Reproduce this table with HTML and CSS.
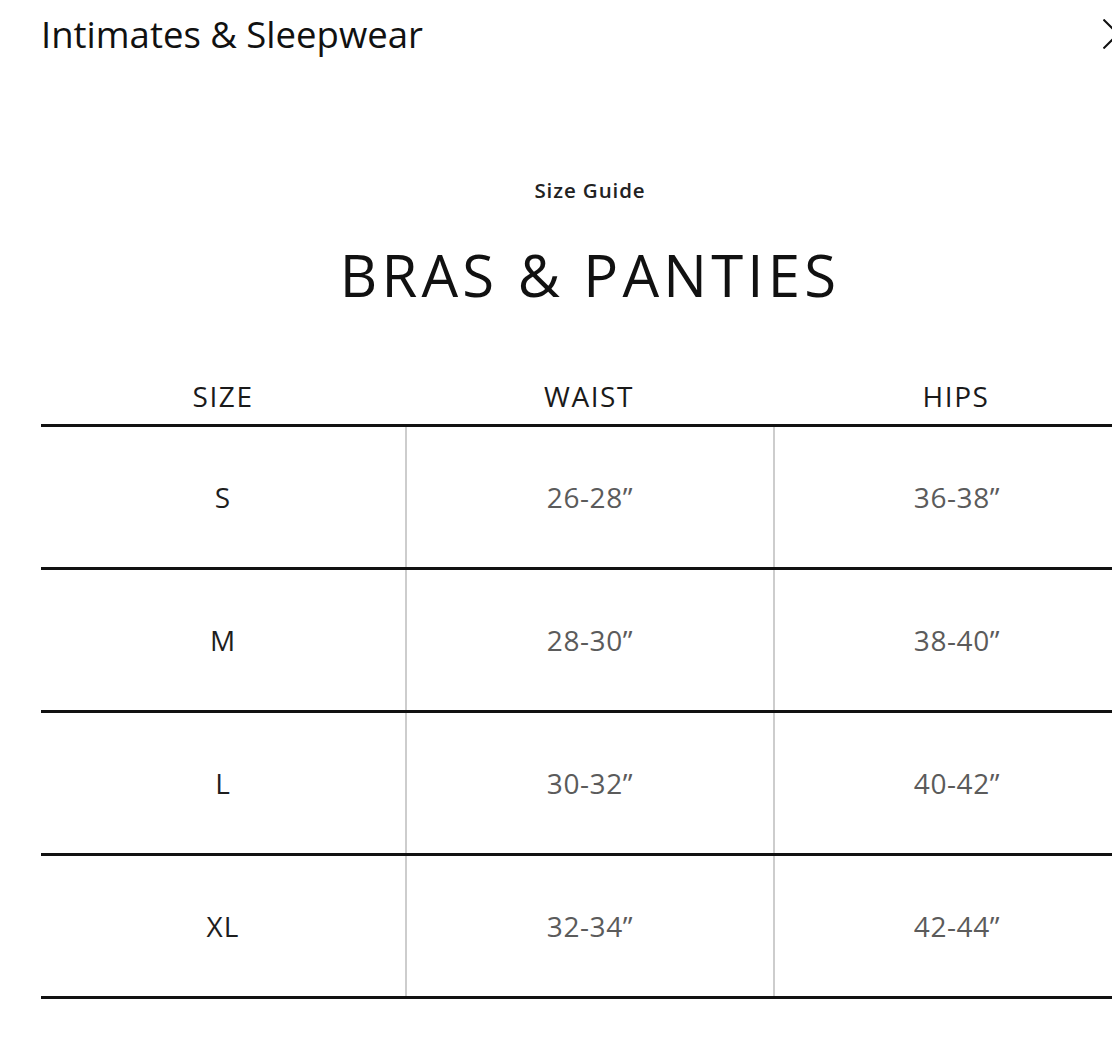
FILE: index.html
```html
<!DOCTYPE html>
<html lang="en">
<head>
<meta charset="utf-8">
<title>Intimates &amp; Sleepwear – Size Guide</title>
<link rel="stylesheet" href="styles.css">
</head>
<body>
  <header class="topbar">
    <h1 class="topbar-title">Intimates &amp; Sleepwear</h1>
    <button class="close-btn" aria-label="Close">
      <svg width="30" height="30" viewBox="0 0 30 30" aria-hidden="true">
        <path d="M0.5 0.5 L29.5 29.5 M0.5 29.5 L29.5 0.5" stroke="#111" stroke-width="2" fill="none"/>
      </svg>
    </button>
  </header>

  <section class="guide">
    <p class="guide-kicker">Size Guide</p>
    <h2 class="guide-title">BRAS &amp; PANTIES</h2>

    <div class="chart">
      <div class="chart-head">
        <div class="head-cell">SIZE</div>
        <div class="head-cell">WAIST</div>
        <div class="head-cell">HIPS</div>
      </div>
      <div class="chart-row">
        <div class="cell cell-size">S</div>
        <div class="cell cell-value">26-28”</div>
        <div class="cell cell-value">36-38”</div>
      </div>
      <div class="chart-row">
        <div class="cell cell-size">M</div>
        <div class="cell cell-value">28-30”</div>
        <div class="cell cell-value">38-40”</div>
      </div>
      <div class="chart-row">
        <div class="cell cell-size">L</div>
        <div class="cell cell-value">30-32”</div>
        <div class="cell cell-value">40-42”</div>
      </div>
      <div class="chart-row">
        <div class="cell cell-size">XL</div>
        <div class="cell cell-value">32-34”</div>
        <div class="cell cell-value">42-44”</div>
      </div>
    </div>
  </section>
</body>
</html>
```
FILE: styles.css
```css
html {
  overflow: hidden;
  background: #fff;
}

body {
  margin: 0;
  width: 1112px;
  overflow: hidden;
  background: #fff;
  font-family: "Open Sans", "Noto Sans", "Liberation Sans", sans-serif;
  color: #111;
}

.topbar {
  display: flex;
  align-items: center;
  justify-content: space-between;
  padding: 10px 0 0 41px;
  height: 48px;
}

.topbar-title {
  margin: 0;
  font-size: 36.5px;
  font-weight: 400;
  line-height: 48px;
  color: #111;
}

.close-btn {
  display: flex;
  padding: 0;
  margin: 0 -21px 0 0;
  border: 0;
  background: none;
  width: 30px;
  height: 30px;
  cursor: pointer;
}

.guide {
  width: 1098px;
  margin: 118px 0 0 41px;
  text-align: center;
}

.guide-kicker {
  margin: 0;
  font-size: 20.5px;
  font-weight: 600;
  line-height: 28px;
  color: #222;
  letter-spacing: 0.9px;
}

.guide-title {
  margin: 36px 0 0;
  font-size: 58px;
  font-weight: 400;
  line-height: 70px;
  letter-spacing: 4.2px;
  color: #111;
}

.chart {
  margin-top: 58px;
}

.chart-head,
.chart-row {
  display: grid;
  grid-template-columns: 364px 368px 366px;
}

.chart-head {
  border-bottom: 3px solid #111;
}

.head-cell {
  font-size: 28px;
  font-weight: 500;
  line-height: 56px;
  letter-spacing: 1.6px;
  color: #1a1a1a;
}

.chart-row {
  border-bottom: 3px solid #111;
}

.cell {
  height: 140px;
  display: flex;
  align-items: center;
  justify-content: center;
  font-size: 28px;
  font-weight: 500;
  line-height: 38px;
}

.cell + .cell {
  border-left: 2px solid #cdcdcd;
}

.cell-size {
  color: #1e1e1e;
  letter-spacing: 1px;
}

.cell-value {
  color: #5b5b5b;
  letter-spacing: 0.6px;
}
```
